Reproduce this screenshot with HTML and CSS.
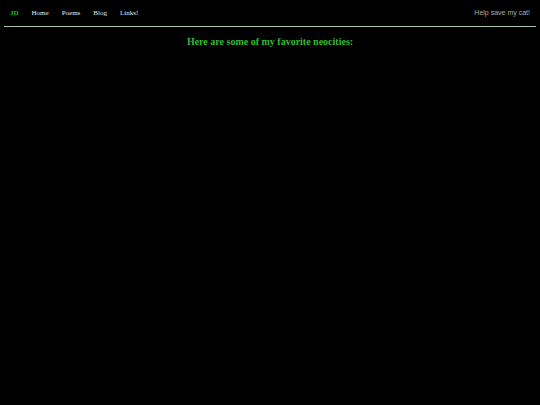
FILE: index.html
```html
<!DOCTYPE html>
<html>
<head>
<meta charset="utf-8">
<link rel="stylesheet" href="styles.css">
</head>
<body>
<nav class="topbar">
  <div class="links">
    <a class="brand" href="#">JD</a>
    <a href="#">Home</a>
    <a href="#">Poems</a>
    <a href="#">Blog</a>
    <a href="#">Links!</a>
  </div>
  <a class="cat" href="#">Help save my cat!</a>
</nav>
<hr class="rule">
<h1 class="title">Here are some of my favorite neocities:</h1>
</body>
</html>
```
FILE: styles.css
```css
html, body {
  margin: 0;
  padding: 0;
  background: #000;
}
body {
  font-family: "Liberation Serif", serif;
}
.topbar {
  display: flex;
  justify-content: space-between;
  align-items: center;
  padding: 4px 10px 0 10px;
  height: 17px;
}
.links {
  display: flex;
  gap: 13px;
}
.topbar a {
  color: #e8e8e8;
  text-decoration: none;
  font-size: 7px;
}
.topbar a.brand {
  color: #22bb22;
  font-weight: bold;
}
.topbar a.cat {
  font-family: "Liberation Sans", sans-serif;
  color: #aaaaaa;
  font-size: 7px;
}
.rule {
  margin: 5px 4px 0 4px;
  border: 0;
  height: 1px;
  background: #a8c8a8;
}
.title {
  margin: 9px 0 0 0;
  text-align: center;
  color: #33bb33;
  font-size: 10px;
  font-weight: bold;
}
```
